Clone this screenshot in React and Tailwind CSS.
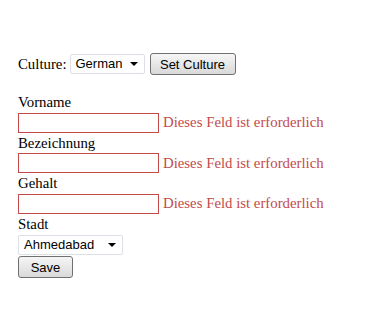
import React from 'react';

const serif = { fontFamily: '"Liberation Serif", "Times New Roman", serif' };
const sans = { fontFamily: '"Liberation Sans", Arial, sans-serif' };

const Field = ({ label }) => (
  <div>
    <div className="h-[20.5px] leading-[20.5px]">{label}</div>
    <div className="flex h-[20px] items-center">
      <input
        type="text"
        className="box-border h-[20px] w-[141px] border border-[#c44a4a] bg-white outline-none"
      />
      <span className="ml-[4px] text-[#c44a4a]">Dieses Feld ist erforderlich</span>
    </div>
  </div>
);

const Select = ({ value, width }) => (
  <div
    className={`box-border flex h-[20px] items-center justify-between rounded-[2px] border border-[#dcdfe6] bg-white pl-[5px] pr-[6px] text-[13px] text-black ${width}`}
    style={sans}
  >
    <span>{value}</span>
    <svg width="8" height="4" viewBox="0 0 8 4">
      <polygon points="0,0 8,0 4,4" fill="#000" />
    </svg>
  </div>
);

const Btn = ({ children, width }) => (
  <button
    className={`box-border h-[22px] rounded-[3px] border border-[#707070] bg-gradient-to-b from-[#f6f6f6] to-[#d9d9d9] text-[13px] text-black ${width}`}
    style={sans}
  >
    {children}
  </button>
);

export default function App() {
  return (
    <div className="min-h-[326px] bg-white pl-[18px] pt-[53px] text-[14.8px] text-black" style={serif}>
      <div className="flex h-[22px] items-center">
        <span className="mr-[3px]">Culture:</span>
        <Select value="German" width="w-[75px]" />
        <div className="ml-[5px]">
          <Btn width="w-[86px]">Set Culture</Btn>
        </div>
      </div>
      <div className="mt-[17px]">
        <Field label="Vorname" />
        <Field label="Bezeichnung" />
        <Field label="Gehalt" />
        <div className="h-[21px] leading-[21px]">Stadt</div>
        <Select value="Ahmedabad" width="w-[105px]" />
        <div className="mt-[1px]">
          <Btn width="w-[55px]">Save</Btn>
        </div>
      </div>
    </div>
  );
}
